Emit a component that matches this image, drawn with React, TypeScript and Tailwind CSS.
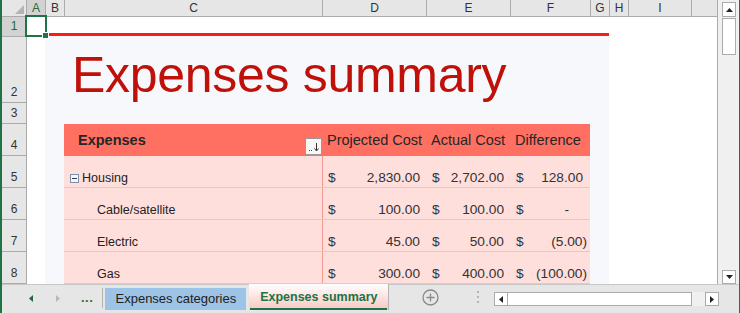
import React from "react";

const columns = [
  { label: "A", w: "w-[19px]", active: true },
  { label: "B", w: "w-[19px]" },
  { label: "C", w: "w-[258px]" },
  { label: "D", w: "w-[104px]" },
  { label: "E", w: "w-[84px]" },
  { label: "F", w: "w-[80px]" },
  { label: "G", w: "w-[19px]" },
  { label: "H", w: "w-[19px]" },
  { label: "I", w: "w-[63px]" },
];

const rows = [
  { n: 1, h: "h-[20px]", active: true },
  { n: 2, h: "h-[66px]" },
  { n: 3, h: "h-[21px]" },
  { n: 4, h: "h-[32px]" },
  { n: 5, h: "h-[32px]" },
  { n: 6, h: "h-[32px]" },
  { n: 7, h: "h-[32px]" },
  { n: 8, h: "h-[32px]" },
];

type Money = { v: string; neg?: boolean; dash?: boolean };

const expenses: { label: string; group?: boolean; projected: Money; actual: Money; diff: Money }[] = [
  { label: "Housing", group: true, projected: { v: "2,830.00" }, actual: { v: "2,702.00" }, diff: { v: "128.00" } },
  { label: "Cable/satellite", projected: { v: "100.00" }, actual: { v: "100.00" }, diff: { v: "-", dash: true } },
  { label: "Electric", projected: { v: "45.00" }, actual: { v: "50.00" }, diff: { v: "(5.00)", neg: true } },
  { label: "Gas", projected: { v: "300.00" }, actual: { v: "400.00" }, diff: { v: "(100.00)", neg: true } },
];

function MoneyCell({ m, w }: { m: Money; w: string }) {
  return (
    <div className={`flex ${w} items-end justify-between pb-[1px] pl-[5px] text-[13.7px] leading-[16px] text-[#333]`}>
      <span>$</span>
      <span className={m.dash ? "pr-[21px]" : m.neg ? "pr-[3px]" : "pr-[7px]"}>{m.v}</span>
    </div>
  );
}

function FilterButton() {
  return (
    <div className="mb-[1px] mr-[1px] flex h-[17px] w-[17px] items-center justify-center border border-[#9a9a9a] bg-[#f7f7f7]">
      <svg width="13" height="13" viewBox="0 0 13 13">
        <path d="M2 10.5h4" stroke="#444" strokeWidth="1" strokeDasharray="1 1" />
        <path d="M9.5 3v7.5" stroke="#333" strokeWidth="1" />
        <path d="M7.5 8.5l2 2.5 2-2.5" fill="none" stroke="#333" strokeWidth="1" />
      </svg>
    </div>
  );
}

function Table() {
  return (
    <div className="ml-[19px] w-[526px]">
      <div className="flex h-[32px] bg-[#ff7062] text-[14.5px] leading-[17px] text-[#262626]">
        <div className="flex w-[259px] items-center justify-between">
          <span className="pl-[14px] font-bold">Expenses</span>
          <div className="self-end">
            <FilterButton />
          </div>
        </div>
        <div className="flex w-[104px] items-center pl-[4px]">Projected Cost</div>
        <div className="flex w-[84px] items-center pl-[4px]">Actual Cost</div>
        <div className="flex w-[79px] items-center pl-[4px]">Difference</div>
      </div>
      {expenses.map((e) => (
        <div key={e.label} className="flex h-[32px] border-b border-[#f6c2bd] bg-[#ffdfdc]">
          <div className="flex w-[259px] items-end border-r border-[#f09a93] pb-[1px] text-[12.5px] leading-[16px] text-[#222]">
            {e.group ? (
              <div className="flex items-end pl-[6px]">
                <span className="mb-[3px] mr-[3px] flex h-[9px] w-[9px] items-center justify-center border border-[#7d90a8] bg-[#f4f6f9]">
                  <span className="h-[1px] w-[5px] bg-[#2d3d55]" />
                </span>
                <span>{e.label}</span>
              </div>
            ) : (
              <span className="pl-[33px]">{e.label}</span>
            )}
          </div>
          <MoneyCell m={e.projected} w="w-[104px]" />
          <MoneyCell m={e.actual} w="w-[84px]" />
          <MoneyCell m={e.diff} w="w-[79px]" />
        </div>
      ))}
    </div>
  );
}

function Sheet() {
  return (
    <div className="flex w-[716px] flex-col border-r border-[#ababab]">
      <div className="flex h-[17px] border-b border-[#ababab] bg-[#e6e6e6] text-[12px] leading-[16px] text-[#333]">
        <div className="flex w-[25px] items-end justify-end border-r border-[#ababab] pb-[2px] pr-[2px]">
          <svg width="9" height="9" viewBox="0 0 9 9">
            <path d="M9 0V9H0Z" fill="#b4b4b4" />
          </svg>
        </div>
        {columns.map((c) => (
          <div
            key={c.label}
            className={`flex ${c.w} items-center justify-center border-r border-[#ababab] ${c.active ? "bg-[#d2d2d2] text-[#1e6b40]" : ""}`}
          >
            {c.label}
          </div>
        ))}
        <div className="flex-1" />
      </div>
      <div className="relative flex h-[267px]">
        <div className="flex w-[25px] flex-col border-r border-[#ababab] bg-[#e6e6e6] text-[12px] leading-[14px] text-[#333]">
          {rows.map((r) => (
            <div
              key={r.n}
              className={`flex ${r.h} shrink-0 items-end justify-center border-b border-[#ababab] pb-[3px] ${r.active ? "bg-[#d2d2d2] text-[#1e6b40]" : ""}`}
            >
              {r.n}
            </div>
          ))}
        </div>
        <div className="flex flex-1 overflow-hidden bg-white">
          <div className="w-[18px]" />
          <div className="flex w-[564px] flex-col bg-[#f7f8fc]">
            <div className="h-[20px] shrink-0">
              <div className="h-[16px] bg-white" />
              <div className="h-[3px] bg-[#fb1e0e]" />
            </div>
            <div className="flex h-[66px] shrink-0 items-end pb-[3px] pl-[27px]">
              <span className="text-[50px] leading-[50px] tracking-[-0.3px] text-[#bf110a]">Expenses summary</span>
            </div>
            <div className="h-[21px] shrink-0" />
            <Table />
          </div>
          <div className="flex-1" />
        </div>
        <div className="absolute left-[23px] top-[-2px] h-[22px] w-[22px] border-2 border-[#217346]" />
        <div className="absolute left-[41px] top-[16px] h-[5px] w-[5px] bg-[#217346] ring-1 ring-white" />
      </div>
    </div>
  );
}

function VScroll() {
  return (
    <div className="flex w-[21px] flex-col bg-[#f0f0f0] pl-[4px] pr-[3px] pt-[2px]">
      <div className="flex h-[15px] items-center justify-center border border-[#ababab] bg-white">
        <svg width="7" height="4" viewBox="0 0 7 4">
          <path d="M0 4L3.5 0 7 4Z" fill="#222" />
        </svg>
      </div>
      <div className="mt-[1px] h-[37px] border border-[#ababab] bg-white" />
      <div className="flex-1" />
      <div className="flex h-[14px] items-center justify-center border border-[#ababab] bg-white">
        <svg width="7" height="4" viewBox="0 0 7 4">
          <path d="M0 0L3.5 4 7 0Z" fill="#222" />
        </svg>
      </div>
    </div>
  );
}

function TabBar() {
  return (
    <div className="flex h-[29px] items-start border-t border-[#c8c8c8] bg-[#e6e6e6] text-[13px] leading-[16px]">
      <div className="mt-[8px] flex h-[10px] w-[56px] items-center justify-center pl-[2px]">
        <svg width="4" height="7" viewBox="0 0 4 7">
          <path d="M4 0V7L0 3.5Z" fill="#1d6a3e" />
        </svg>
      </div>
      <div className="mt-[8px] flex h-[10px] w-[0px] items-center justify-center">
        <svg width="4" height="7" viewBox="0 0 4 7" className="shrink-0">
          <path d="M0 0V7L4 3.5Z" fill="#b8b8b8" />
        </svg>
      </div>
      <div className="ml-[23px] mt-[6px] text-[13px] font-bold leading-[14px] tracking-[0.5px] text-[#217346]">...</div>
      <div className="ml-[9px] mt-[3px] h-[20px] w-[1px] bg-[#b3b3b3]" />
      <div className="ml-[2px] mt-[3px] flex h-[22px] w-[141px] items-center justify-center bg-[#9dc3e6] text-[#222]">
        Expenses categories
      </div>
      <div className="ml-[3px] mt-[-1px] flex h-[26px] w-[140px] flex-col border-r border-[#b3b3b3] bg-gradient-to-b from-white to-[#f8c6c2]">
        <div className="flex flex-1 items-center justify-center pt-[2px] text-[12.5px] font-bold text-[#217346]">
          Expenses summary
        </div>
        <div className="mx-[1px] h-[2px] bg-[#217346]" />
      </div>
      <div className="ml-[33px] mt-[4px]">
        <svg width="17" height="17" viewBox="0 0 17 17">
          <circle cx="8.5" cy="8.5" r="7.5" fill="none" stroke="#8a8a8a" strokeWidth="1.3" />
          <path d="M8.5 4.5v8M4.5 8.5h8" stroke="#8a8a8a" strokeWidth="1.3" />
        </svg>
      </div>
      <div className="ml-[38px] mt-[6px] flex flex-col gap-[3px]">
        <div className="h-[2px] w-[2px] bg-[#b3b3b3]" />
        <div className="h-[2px] w-[2px] bg-[#b3b3b3]" />
        <div className="h-[2px] w-[2px] bg-[#b3b3b3]" />
      </div>
      <div className="ml-[15px] mt-[7px] flex h-[14px] w-[225px] bg-[#f0f0f0]">
        <div className="flex w-[14px] items-center justify-center border border-[#ababab] bg-white">
          <svg width="4" height="7" viewBox="0 0 4 7">
            <path d="M4 0V7L0 3.5Z" fill="#222" />
          </svg>
        </div>
        <div className="w-[184px] border border-l-0 border-[#ababab] bg-white" />
        <div className="flex-1" />
        <div className="flex w-[14px] items-center justify-center border border-[#ababab] bg-white">
          <svg width="4" height="7" viewBox="0 0 4 7">
            <path d="M0 0V7L4 3.5Z" fill="#222" />
          </svg>
        </div>
      </div>
    </div>
  );
}

export default function App() {
  return (
    <div className="flex h-[313px] w-[740px] flex-col overflow-hidden border-l-2 border-r border-[#217346] bg-[#e6e6e6] font-['Liberation_Sans',Arial,sans-serif]">
      <div className="flex h-[284px] shrink-0">
        <Sheet />
        <VScroll />
      </div>
      <TabBar />
    </div>
  );
}
